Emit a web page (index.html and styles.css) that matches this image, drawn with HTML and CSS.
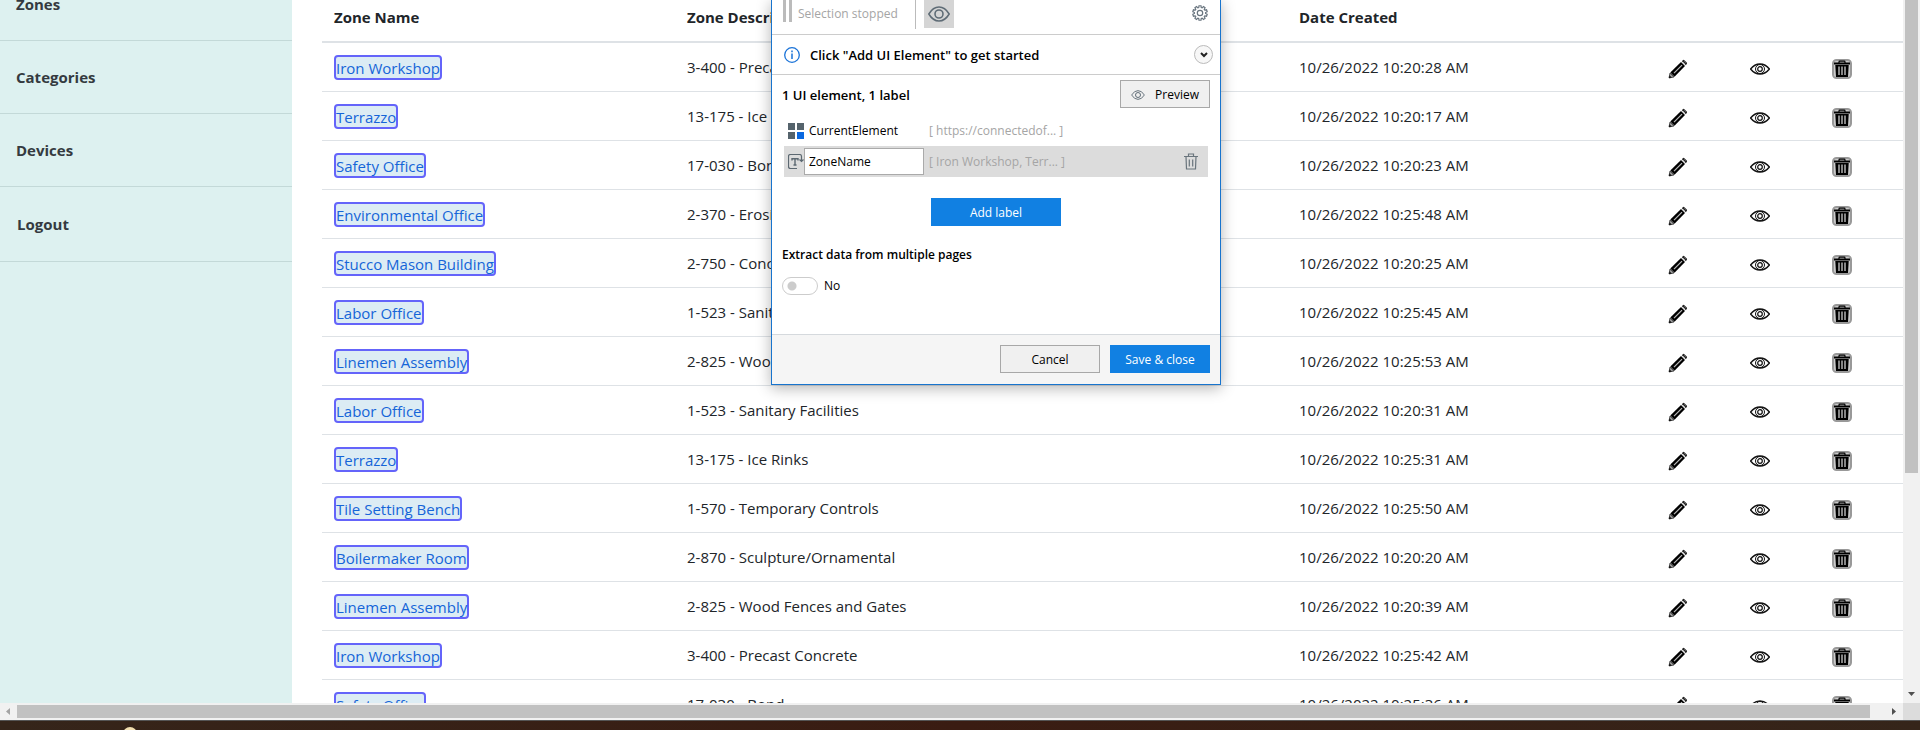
FILE: index.html
```
<!DOCTYPE html>
<html lang="en">
<head>
<meta charset="utf-8">
<title>Zones</title>
<link rel="stylesheet" href="styles.css">
</head>
<body>
<svg class="defs" aria-hidden="true">
  <symbol id="pencil" viewBox="0 0 20 20">
    <path d="M1 19 2 14 6 18Z" fill="#999" stroke="#333" stroke-width=".8"/>
    <path d="M1 19l.6-2.600 2 2Z" fill="#000"/>
    <path d="M2.300 13.500 13 3 17 7 6.500 17.700Z" fill="#000"/>
    <path d="M6 14.200 14 6.200" stroke="#bbb" stroke-width="1.200"/>
    <path d="M13.800 2.300 15 1.100Q15.700.6 16.400 1.200L18.800 3.600Q19.300 4.300 18.800 5L17.700 6.200Z" fill="#222"/>
    <path d="M14.800 2.800 17.300 5.300M16.500 2.500 17.500 3.500" stroke="#999" stroke-width=".9"/>
  </symbol>
  <symbol id="eye" viewBox="0 0 20 12">
    <path d="M.6 6Q4.500 1 10 1t9.400 5Q15.500 11 10 11T.6 6Z" fill="none" stroke="#111" stroke-width="1.400"/>
    <circle cx="10" cy="6" r="4.500" fill="none" stroke="#111"/>
    <circle cx="10" cy="6" r="2.300" fill="none" stroke="#111" stroke-width="1.200"/>
  </symbol>
  <symbol id="bin" viewBox="0 0 20 20">
    <rect x="1" y="1" width="18" height="18" rx="3.500" fill="#ccc" stroke="#999" stroke-width="2"/>
    <path d="M7 4V3q0-.8.8-.8h4.400q.8 0 .8.800v1" fill="none" stroke="#000" stroke-width="1.200"/>
    <path d="M2 3.500h16v2H2Z M3.300 6h13.400L16 18H4Z" fill="#000"/>
    <path d="M7 7.500v8.500M10 7.500v8.500M13 7.500v8.500" stroke="#ccc" stroke-width="1.300"/>
  </symbol>
  <symbol id="look" viewBox="0 0 22 16">
    <path d="M.8 8Q5 1 11 1t10.200 7Q17 15 11 15T.8 8Z" fill="none" stroke="#5f6c76" stroke-width="1.500"/>
    <circle cx="11" cy="8" r="4" fill="none" stroke="#5f6c76" stroke-width="1.600"/>
  </symbol>
</svg>
<div class="screen">
  <div class="view">
    <nav class="side">
      <a href="#">Zones</a><a href="#">Categories</a><a href="#">Devices</a><a href="#" class="last">Logout</a>
    </nav>
    <main class="main">
      <table class="zones">
        <colgroup><col class="c-name"><col class="c-desc"><col class="c-date"><col class="c-icon"><col class="c-icon"><col class="c-icon"></colgroup>
        <thead><tr><th>Zone Name</th><th>Zone Description</th><th>Date Created</th><th></th><th></th><th></th></tr></thead>
        <tbody id="rows"></tbody>
      </table>
    </main>
    <div class="vbar"><div class="vthumb"></div><svg class="arrow" width="7" height="4"><path d="M0 0h7L3.500 4Z" fill="#505050"/></svg></div>
  </div>
  <div class="hbar">
    <svg class="arrow" width="4" height="7"><path d="M4 0v7L0 3.500Z" fill="#a3a3a3"/></svg>
    <div class="hthumb"></div>
    <svg class="arrow" width="4" height="7"><path d="M0 0v7L4 3.500Z" fill="#505050"/></svg>
    <div class="corner"></div>
  </div>
  <div class="desk"><div class="dot"></div></div>
</div>

<section class="dialog">
  <div class="tools">
    <span class="pause"></span><span class="stopped">Selection stopped</span><span class="split"></span>
    <button class="toggle-look" aria-label="Highlight"><svg width="22" height="16"><use href="#look"/></svg></button>
    <button class="gear" aria-label="Settings"><svg width="16" height="16" viewBox="0 0 16 16" fill="none" stroke="#6a7680" stroke-width="1.200"><path id="gearpath" d=""/><circle cx="8" cy="8" r="2.700"/></svg></button>
  </div>
  <div class="hint">
    <svg width="16" height="16" viewBox="0 0 16 16"><circle cx="8" cy="8" r="7.300" fill="none" stroke="#1a73d8" stroke-width="1.300"/><path d="M8 3.600v1.700M8 6.500v5.500" stroke="#1a73d8" stroke-width="1.500"/></svg>
    <h2>Click "Add UI Element" to get started</h2>
    <button class="fold" aria-label="Expand"><svg width="8" height="6" viewBox="0 0 8 6"><path d="M1 1l3 3 3-3" fill="none" stroke="#222" stroke-width="2"/></svg></button>
  </div>
  <div class="content">
    <div class="summary"><h3>1 UI element, 1 label</h3><button class="btn preview"><svg width="14" height="10"><use href="#look"/></svg>Preview</button></div>
    <div class="item"><svg width="16" height="16"><path d="M0 0h7v7H0ZM9 0h7v7H9ZM0 9h7v7H0Z" fill="#55636c"/><path d="M9 9h7v7H9Z" fill="#0a68e0"/></svg><span class="item-name">CurrentElement</span><span class="value">[ https://connectedof... ]</span></div>
    <div class="item picked"><svg width="16" height="16" viewBox="0 0 16 16" fill="none" stroke="#5c6871"><path d="M9 14.500H2.500Q.5 14.500.5 12.500v-10Q.5.500 2.500.500h9q2 0 2 2v5M11.500 5.500 13.500 7.500l2-2" stroke-width="1.200"/><path d="M4 6.500V4.700h6v1.800M7 4.700v6.300M5.500 11h3" stroke-width="1.400"/></svg><input class="item-name" aria-label="Label name" value="ZoneName"><span class="value">[ Iron Workshop, Terr... ]</span>
      <button class="remove" aria-label="Delete label"><svg width="14" height="17" viewBox="0 0 14 17" fill="none" stroke="#69747c" stroke-width="1.200"><path d="M0 3.500h14M4.500 3.500V1h5v2.500M2 3.500l.5 12.500h9L12 3.500M5.300 6.500v7M8.700 6.500v7"/></svg></button></div>
    <button class="btn primary add">Add label</button>
    <h4>Extract data from multiple pages</h4>
    <label class="switch"><input type="checkbox">No</label>
  </div>
  <footer class="actions"><button class="btn">Cancel</button><button class="btn primary">Save &amp; close</button></footer>
</section>
<script src="app.js"></script>
</body>
</html>
```
FILE: styles.css
```
* { box-sizing: border-box; }
body { margin: 0; height: 100vh; overflow: hidden; position: relative; background: #fff; color: #212529; font-family: "Segoe UI", "Open Sans", "Noto Sans", sans-serif; font-size: 15px; line-height: 24px; }
button { font: inherit; color: inherit; border: 0; padding: 0; background: none; }
h2, h3, h4 { margin: 0; }
svg { display: block; flex: none; }
.defs { position: absolute; width: 0; height: 0; }
.screen { height: 100%; display: flex; flex-direction: column; }
.view { flex: 1; min-height: 0; display: flex; overflow: hidden; }
.side { width: 292px; flex: none; background: #ddf1f0; display: flex; flex-direction: column; }
.side a { height: 73px; padding: 24px 16px; flex: none; border-bottom: 1px solid #c3d9d8; color: #343a40; font-weight: 700; text-decoration: none; }
.side a:first-child { height: 41px; padding-top: 0; line-height: 9px; }
.side a.last { height: 75px; padding: 25px 17px; }
.main { flex: 1; min-width: 0; padding-left: 30px; overflow: hidden; }
.zones { width: 100%; table-layout: fixed; border-collapse: separate; border-spacing: 0; }
.c-name { width: 353px; }
.c-desc { width: 612px; }
.c-icon { width: 82px; }
.zones th { height: 43px; padding: 5px 12px 12px; text-align: left; font-weight: 700; border-bottom: 2px solid #dee2e6; }
.zones td { height: 49px; padding: 0 12px; border-bottom: 1px solid #dee2e6; white-space: nowrap; }
.zones td a { display: block; width: max-content; height: 25px; border: 2px solid #6464fa; border-radius: 4px; background: #dcecf4; color: #1565d8; text-decoration: none; line-height: 22px; }
.zones td.icon { padding: 3px 11px 0; }
.icon button { display: block; }
.vbar { width: 17px; flex: none; background: #f1f1f1; padding: 0 0 7px 2px; display: flex; flex-direction: column; justify-content: space-between; }
.vthumb { height: 68%; margin-right: 2px; background: #c1c1c1; }
.vbar .arrow { margin-left: 3px; }
.hbar { height: 17px; flex: none; background: #f1f1f1; display: flex; align-items: center; }
.hbar .arrow { margin: 0 7px 0 6px; }
.hthumb { flex: 1; height: 13px; margin-right: 16px; background: #c1c1c1; }
.corner { width: 17px; height: 17px; background: #dcdcdc; }
.desk { height: 10px; background: linear-gradient(90deg, #35251a, #3a1c12 50%, #35251a); border-top: 1px solid #555; overflow: hidden; }
.dot { width: 14px; height: 14px; margin: 6px 0 0 123px; border-radius: 50%; background: #f2dfb0; }

.dialog { position: absolute; top: 0; left: 771px; width: 450px; border: 1px solid #1874cd; border-top: 0; background: #fff; box-shadow: 0 3px 14px rgba(0, 0, 0, .3); color: #000; font-size: 12px; line-height: 16px; }
.tools { height: 35px; padding: 0 10px 6px 11px; border-bottom: 1px solid #ccc; display: flex; align-items: flex-start; }
.pause { width: 9px; height: 22px; border: solid #bbb; border-width: 0 3px; }
.stopped { margin: 6px 0 0 6px; color: #a5a5a5; }
.split { width: 1px; height: 29px; margin: 0 8px 0 auto; background: #bbb; }
.toggle-look { width: 30px; height: 28px; margin-right: 238px; display: grid; place-items: center; background: #d5d5d5; }
.gear { margin: 5px 2px 0 0; }
.hint { height: 40px; padding: 0 7px 0 12px; border-bottom: 1px solid #ccc; display: flex; align-items: center; gap: 10px; }
.hint h2 { flex: 1; font-size: 13px; font-weight: 600; }
.fold { width: 19px; height: 19px; border: 1px solid #bbb; border-radius: 50%; background: #f7f7f7; display: grid; place-items: center; }
.content { height: 259px; padding: 5px 10px; display: flex; flex-direction: column; }
.summary { display: flex; justify-content: space-between; align-items: center; margin-bottom: 7px; }
.summary h3 { padding-top: 2px; font-size: 13px; font-weight: 600; }
.btn { width: 100px; height: 28px; padding-top: 1px; border: 1px solid #a8a8a8; background: #f0f0f0; }
.primary { border: 0; background: #1180e2; color: #fff; }
.preview { width: 90px; display: flex; align-items: center; justify-content: center; gap: 10px; }
.item { height: 31px; padding: 0 10px 0 4px; margin: 0 2px; display: flex; align-items: center; }
.item-name { width: 120px; height: 27px; padding: 0 4px; border: 1px solid transparent; font: inherit; line-height: 25px; color: #000; }
input.item-name { border-color: #aaa; background: #fff; }
.value { padding-left: 5px; color: #a5a5a5; }
.picked { background: #dcdcdc; }
.remove { margin-left: auto; }
.add { width: 130px; align-self: center; margin-top: 21px; }
.content h4 { margin-top: 21px; font-size: 12px; font-weight: 600; }
.switch { margin-top: 14px; display: flex; align-items: center; gap: 6px; }
.switch input { appearance: none; margin: 0; width: 36px; height: 18px; border: 1px solid #ccc; border-radius: 9px; background: radial-gradient(circle at 9px 8px, #ccc 4px, transparent 5px); }
.actions { height: 50px; padding: 10px; border-top: 1px solid #d5d9dd; background: #f5f5f5; display: flex; justify-content: flex-end; gap: 10px; }
```
FILE: app.js
```
const zones = [
  ["Iron Workshop", "3-400 - Precast Concrete", "10:20:28"],
  ["Terrazzo", "13-175 - Ice Rinks", "10:20:17"],
  ["Safety Office", "17-030 - Bond", "10:20:23"],
  ["Environmental Office", "2-370 - Erosion Control", "10:25:48"],
  ["Stucco Mason Building", "2-750 - Concrete Paving", "10:20:25"],
  ["Labor Office", "1-523 - Sanitary Facilities", "10:25:45"],
  ["Linemen Assembly", "2-825 - Wood Fences and Gates", "10:25:53"],
  ["Labor Office", "1-523 - Sanitary Facilities", "10:20:31"],
  ["Terrazzo", "13-175 - Ice Rinks", "10:25:31"],
  ["Tile Setting Bench", "1-570 - Temporary Controls", "10:25:50"],
  ["Boilermaker Room", "2-870 - Sculpture/Ornamental", "10:20:20"],
  ["Linemen Assembly", "2-825 - Wood Fences and Gates", "10:20:39"],
  ["Iron Workshop", "3-400 - Precast Concrete", "10:25:42"],
  ["Safety Office", "17-030 - Bond", "10:25:36"]
];
const icon = (id, label, w, h) =>
  `<td class="icon ${id}"><button aria-label="${label}"><svg width="${w}" height="${h}"><use href="#${id}"/></svg></button></td>`;
document.getElementById("rows").innerHTML = zones.map(([name, desc, time]) =>
  `<tr><td><a href="#">${name}</a></td><td>${desc}</td><td>10/26/2022 ${time} AM</td>` +
  icon("pencil", "Edit", 20, 20) + icon("eye", "View", 20, 12) + icon("bin", "Delete", 20, 20) + "</tr>").join("");

// Gear outline: ten teeth around the centre of a 16px box.
const points = [];
for (let i = 0; i < 10; i++) {
  [[-13, 5.6], [-8, 7.3], [8, 7.3], [13, 5.6]].forEach(([offset, r]) => {
    const a = (i * 36 + offset) * Math.PI / 180;
    points.push(`${(8 + r * Math.sin(a)).toFixed(2)} ${(8 - r * Math.cos(a)).toFixed(2)}`);
  });
}
document.getElementById("gearpath").setAttribute("d", "M" + points.join("L") + "Z");
```
